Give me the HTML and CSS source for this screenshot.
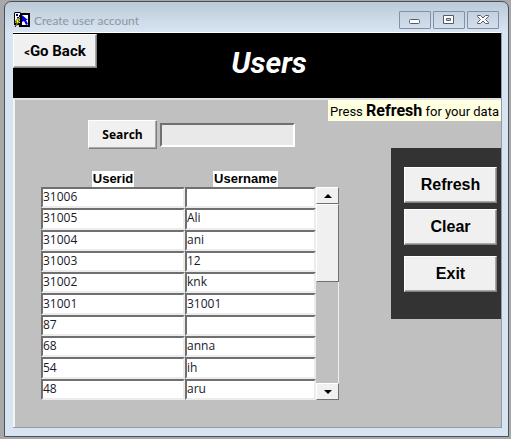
FILE: index.html
```html
<!DOCTYPE html>
<html lang="en">
<head>
<meta charset="utf-8">
<title>Create user account</title>
<link rel="stylesheet" href="styles.css">
</head>
<body>
<div class="window">
  <div class="titlebar">
    <svg class="app-icon" width="16" height="16" viewBox="0 0 16 16" aria-hidden="true">
      <path d="M1 0h5l1 1h9v14H5v-2H0V1z" fill="#000"/>
      <path d="M1 1h5v10H1zM8 3h6v10H8z" fill="#fff"/>
      <path d="M2 2h2v2H2zM5 3h1v2H5zM3 5h2v1H3z" fill="#000080"/>
      <path d="M8 3v7l2-1 2 4 2-1-2-4h2z" fill="#0000e8"/>
      <path d="M4 6L1 10h2l-2 5 5-6H4l2-3z" fill="#ff0" stroke="#000" stroke-width=".6"/>
    </svg>
    <span class="title">Create user account</span>
    <div class="controls">
      <button class="control" type="button" aria-label="Minimize">
        <svg width="12" height="12" viewBox="0 0 12 12"><rect x="0.5" y="5.5" width="10" height="4" rx="1" fill="#fff" stroke="#545c6c"/></svg>
      </button>
      <button class="control" type="button" aria-label="Maximize">
        <svg width="12" height="12" viewBox="0 0 12 12"><path d="M.5 1.5h10v8H.5zM3.500 4.500h4v2h-4z" fill="#fff" fill-rule="evenodd" stroke="#545c6c"/></svg>
      </button>
      <button class="control" type="button" aria-label="Close">
        <svg width="12" height="12" viewBox="0 0 12 12"><path d="M.5 1.500h3L6 4l2.500-2.500h3v1L8.500 5.500l3 3v1h-3L6 7 3.500 9.500h-3v-1l3-3-3-3z" fill="#fff" stroke="#545c6c"/></svg>
      </button>
    </div>
  </div>
  <div class="client">
    <header class="banner">
      <button class="button back" type="button"><small>&lt;</small>Go Back</button>
      <h1>Users</h1>
    </header>
    <main class="form">
      <p class="hint">Press <strong>Refresh</strong> for your data</p>
      <section class="content">
        <div class="search">
          <button class="button search-button" type="button">Search</button>
          <input class="search-box" type="text" aria-label="Search users">
        </div>
        <div class="list">
          <table class="users">
            <thead><tr><th scope="col"><span>Userid</span></th><th scope="col" class="name"><span>Username</span></th></tr></thead>
            <tbody>
              <tr><td>31006</td><td></td></tr>
              <tr><td>31005</td><td>Ali</td></tr>
              <tr><td>31004</td><td>ani</td></tr>
              <tr><td>31003</td><td>12</td></tr>
              <tr><td>31002</td><td>knk</td></tr>
              <tr><td>31001</td><td>31001</td></tr>
              <tr><td>87</td><td></td></tr>
              <tr><td>68</td><td>anna</td></tr>
              <tr><td>54</td><td>ih</td></tr>
              <tr><td>48</td><td>aru</td></tr>
            </tbody>
          </table>
          <div class="scrollbar">
            <button class="arrow" type="button" aria-label="Scroll up"><svg width="8" height="4" viewBox="0 0 8 4"><path d="M0 4l4-4 4 4z"/></svg></button>
            <div class="thumb"></div>
            <button class="arrow down" type="button" aria-label="Scroll down"><svg width="8" height="4" viewBox="0 0 8 4"><path d="M0 0h8L4 4z"/></svg></button>
          </div>
        </div>
      </section>
      <aside class="panel">
        <button class="button action" type="button">Refresh</button>
        <button class="button action" type="button">Clear</button>
        <button class="button action exit" type="button">Exit</button>
      </aside>
    </main>
  </div>
</div>
</body>
</html>
```
FILE: styles.css
```css
* { box-sizing: border-box; }

body {
  margin: 0;
  min-height: 100vh;
  padding: 1px 2px 2px 4px;
  display: flex;
  background: #a8a8a8;
  color: #000;
  font-family: "Open Sans", "Noto Sans", sans-serif;
  font-size: 12px;
}

.window {
  flex: 1;
  display: flex;
  flex-direction: column;
  padding: 0 7px 8px 8px;
  border: 1px solid #48525c;
  border-radius: 7px 7px 0 0;
  background: linear-gradient(#bccad8, #d8e4f1 30px);
}

.titlebar {
  display: flex;
  align-items: center;
  height: 30px;
  padding: 6px 2px 0 1px;
}

.app-icon { margin-right: 4px; }

.title {
  flex: 1;
  color: #8d979f;
  font-family: Lato, sans-serif;
}

.controls { display: flex; gap: 2px; }

.control {
  display: flex;
  align-items: center;
  justify-content: center;
  width: 32px;
  height: 18px;
  padding: 0;
  border: 1px solid #8291a8;
  border-radius: 1px;
  background: linear-gradient(#c4d1df, #d2deeb);
}

.client {
  flex: 1;
  display: flex;
  flex-direction: column;
  border: 1px solid #919ca6;
  border-top-color: #fff;
  border-left: 0;
  margin-right: -1px;
}

.banner {
  display: grid;
  grid-template-columns: 84px 1fr 60px;
  align-items: start;
  height: 65px;
  background: #000;
}

h1 {
  margin: 0;
  color: #fff;
  font: italic 700 30px/60px Roboto, sans-serif;
  text-align: center;
}

.button {
  padding: 0;
  border: 1px solid;
  border-color: #fff #808080 #808080 #fff;
  box-shadow: inset -1px -1px #a8a8a8;
  background: #f0f0f0;
  color: #000;
  font-weight: 700;
}

.back {
  height: 34px;
  margin-top: 1px;
  font-family: Roboto, sans-serif;
  font-size: 15px;
}

.back small { font-size: 11px; }

.form {
  flex: 1;
  display: grid;
  grid-template-columns: 1fr 110px;
  grid-template-rows: 20px 1fr;
  border-top: 2px solid #e0e0e0;
  border-left: 2px solid #f4f4f4;
  background: #c0c0c0;
}

.hint {
  grid-column: 1 / -1;
  justify-self: end;
  height: 21px;
  margin: 0;
  padding: 0 2px;
  background: #ffffe1;
  font: 13px/21px Roboto, sans-serif;
}

.hint strong { font-size: 16px; }

.search {
  display: flex;
  align-items: center;
  gap: 3px;
  padding-left: 73px;
}

.search-button {
  width: 69px;
  height: 29px;
  font-family: "Open Sans", sans-serif;
  font-size: 12px;
}

.search-box {
  width: 135px;
  height: 24px;
  border: 2px solid;
  border-color: #707070 #fff #fff #707070;
  background: #e9e9e9;
}

.list {
  display: flex;
  align-items: flex-end;
  width: 298px;
  margin: 22px 0 0 26px;
}

.users {
  flex: 1;
  border-collapse: separate;
  border-spacing: 0;
  table-layout: fixed;
  height: 229px;
}

th {
  height: 16px;
  padding: 0;
  font: 700 13px/16px "Liberation Sans", sans-serif;
}

th span {
  display: inline-block;
  padding: 0 1px;
  background: #fff;
}

.name { width: 131px; padding-right: 10px; }

td {
  padding: 0 0 2px;
  border: 2px solid;
  border-color: #707070 #ececec #ececec #707070;
  background: #fff;
  color: #181828;
  line-height: 15px;
}

.scrollbar {
  display: flex;
  flex-direction: column;
  width: 23px;
  height: 213px;
  border-right: 1px solid #f0f0f0;
  background: #c0c0c0;
}

.arrow, .thumb {
  border: 1px solid;
  border-color: #fff #707070 #707070 #fff;
  margin-right: -1px;
  background: #f0f0f0;
}

.arrow {
  display: flex;
  align-items: center;
  justify-content: center;
  height: 17px;
  padding: 0;
}

.thumb { height: 78px; }
.down { margin-top: auto; }

.panel {
  display: flex;
  flex-direction: column;
  gap: 6px;
  align-self: start;
  height: 171px;
  margin-top: 28px;
  padding: 19px 4px 0 13px;
  background: #333;
}

.action {
  height: 36px;
  font-family: "Liberation Sans", sans-serif;
  font-size: 16px;
}

.exit { margin-top: 5px; }
```
